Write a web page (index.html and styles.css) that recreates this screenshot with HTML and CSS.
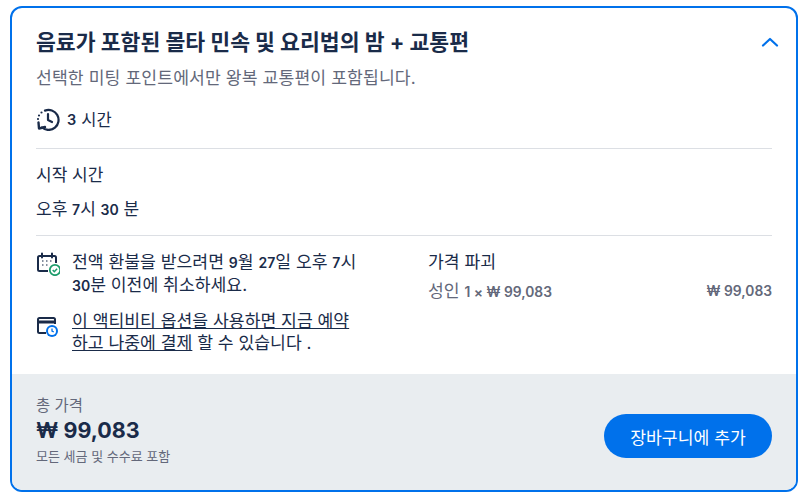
FILE: index.html
```html
<!DOCTYPE html>
<html lang="ko">
<head>
<meta charset="utf-8">
<title>옵션</title>
<link rel="stylesheet" href="styles.css">
</head>
<body>
<section class="card">
  <div class="body">
    <div class="head">
      <h2 class="title">음료가 포함된 몰타 민속 및 요리법의 밤 + 교통편</h2>
      <svg class="chevron" width="18" height="10" viewBox="0 0 18 10"><path d="M2 8.500 9 2l7 6.500" fill="none" stroke="#0071eb" stroke-width="2.200" stroke-linecap="round" stroke-linejoin="round"/></svg>
    </div>
    <p class="sub">선택한 미팅 포인트에서만 왕복 교통편이 포함됩니다.</p>
    <div class="duration">
      <svg width="24" height="24" viewBox="0 0 24 24" fill="none" stroke="#1a2b49" stroke-width="2.200" stroke-linecap="round" stroke-linejoin="round"><path d="M9 3.600A10 10 0 1 1 6 20.500"/><path d="M12 7v6l4 2"/><path d="M2.500 15.500 3 21.500l6-1.500" stroke-width="2.400"/><path d="M5.500 5.500v.01M3 8.500v.01M2 12v.01" stroke-width="2.200"/></svg>
      <span class="num">3</span><span>시간</span>
    </div>
    <hr class="rule">
    <div class="start-label">시작 시간</div>
    <div class="start-time">오후 <b>7</b>시 <b>30</b> 분</div>
    <hr class="rule rule-low">
    <div class="columns">
      <div class="notes">
        <div class="note">
          <svg class="nicon" width="24" height="24" viewBox="0 0 24 24" fill="none"><path d="M12 19H3.500A1.500 1.500 0 0 1 2 17.500V5.500A1.500 1.500 0 0 1 3.500 4h15A1.500 1.500 0 0 1 20 5.500V11" stroke="#1a2b49" stroke-width="2"/><path d="M6 1.500v4M16 1.500v4" stroke="#1a2b49" stroke-width="2" stroke-linecap="round"/><path d="M6 9h1.500M10 9h1.500M14 9h1.500M6 13h1.500M10 13h1.500" stroke="#5d6a80" stroke-width="1.600"/><circle cx="19" cy="18" r="5.200" fill="#fff" stroke="#1d9c6c" stroke-width="1.800"/><path d="m16.700 18 1.600 1.700 2.800-3" stroke="#1d9c6c" stroke-width="1.500" fill="none"/></svg>
          <p class="ntext">전액 환불을 받으려면 <b>9</b>월 <b>27</b>일 오후 <b>7</b>시<br><b>30</b>분 이전에 취소하세요.</p>
        </div>
        <div class="note note-pay">
          <svg class="nicon nicon-pay" width="24" height="24" viewBox="0 0 24 24" fill="none"><path d="M10 19H3.500A1.500 1.500 0 0 1 2 17.500V5.500A1.500 1.500 0 0 1 3.500 4h14A1.500 1.500 0 0 1 19 5.500V10" stroke="#1a2b49" stroke-width="2"/><path d="M2 8h17" stroke="#1a2b49" stroke-width="3"/><circle cx="16" cy="17" r="6" fill="#0071eb"/><circle cx="16" cy="17" r="4" fill="#fff"/><path d="M16 14.500V17l1.800 1" stroke="#0071eb" stroke-width="1.300"/></svg>
          <p class="ntext"><a class="link" href="#">이 액티비티 옵션을 사용하면 지금 예약<br>하고 나중에 결제</a> 할 수 있습니다 .</p>
        </div>
      </div>
      <div class="price">
        <div class="price-title">가격 파괴</div>
        <div class="price-row"><span>성인 <span class="lat">1 × ₩ 99,083</span></span><span class="lat">₩ 99,083</span></div>
      </div>
    </div>
  </div>
  <footer class="foot">
    <div class="total">
      <div class="total-label">총 가격</div>
      <div class="total-price">₩ 99,083</div>
      <div class="total-note">모든 세금 및 수수료 포함</div>
    </div>
    <button class="cart" type="button">장바구니에 추가</button>
  </footer>
</section>
</body>
</html>
```
FILE: styles.css
```css
* { box-sizing: border-box; }
html, body { margin: 0; background: #fff; }
body {
  padding: 6px 12px 0 10px;
  font-family: Inter, "Noto Sans CJK KR", sans-serif;
  color: #1a2b49;
  font-size: 17.2px;
}
.card {
  width: 788px;
  height: 486px;
  border: 2px solid #0071eb;
  border-radius: 12px;
  overflow: hidden;
  display: flex;
  flex-direction: column;
}
.body { flex: 1; padding: 20px 24px 0; }
.head { display: flex; justify-content: space-between; align-items: center; height: 28px; }
.title { margin: 0; font-size: 21.6px; font-weight: 700; line-height: 28px; letter-spacing: 0; }
.chevron { margin-right: -7px; }
.sub { margin: 11px 0 0; line-height: 22px; color: #63687a; letter-spacing: 0.1px; }
.duration { display: flex; align-items: center; gap: 5px; margin-top: 18px; height: 24px; font-size: 16.500px; }
.num { font-size: 14.5px; font-weight: 600; margin-left: 2px; }
.rule { border: 0; border-top: 1px solid #dcdfe4; margin: 17px 0 0; }
.start-label { margin-top: 14px; line-height: 24px; font-size: 17px; }
.start-time { margin-top: 10px; line-height: 24px; font-size: 17px; }
.start-time b { font-size: 14px; font-weight: 600; }
.ntext b { font-size: 14px; font-weight: 600; }
.rule-low { margin-top: 13px; }
.columns { display: flex; margin-top: 15px; }
.notes { width: 392px; flex: none; }
.note { display: flex; gap: 12px; }
.note-pay { margin-top: 13px; }
.nicon { flex: none; margin-top: 1px; }
.nicon-pay { margin-top: 4px; }
.ntext { margin: 0; line-height: 22px; width: 300px; white-space: nowrap; }
.link { color: inherit; text-decoration: underline; text-underline-offset: 1px; }
.price { flex: 1; }
.price-title { line-height: 24px; margin-top: -1px; }
.price-row { display: flex; justify-content: space-between; margin-top: 5px; line-height: 24px; color: #63687a; }
.lat { font-size: 13.8px; font-weight: 600; }
.foot {
  height: 116px;
  flex: none;
  background: #e9edf0;
  padding: 0 24px;
  display: flex;
  justify-content: space-between;
  align-items: center;
}
.total { margin-top: -3px; }
.total-label { font-size: 15.4px; line-height: 18px; color: #63687a; }
.total-price { font-size: 21.500px; font-weight: 700; line-height: 32px; margin-top: -1px; }
.total-note { font-size: 13px; line-height: 18px; color: #63687a; margin-top: 1px; }
.cart {
  width: 168px;
  height: 44px;
  margin-top: 8px;
  border: 0;
  border-radius: 22px;
  background: #0071eb;
  color: #fff;
  font: inherit;
  font-size: 17.2px;
  padding: 0;
}
```
